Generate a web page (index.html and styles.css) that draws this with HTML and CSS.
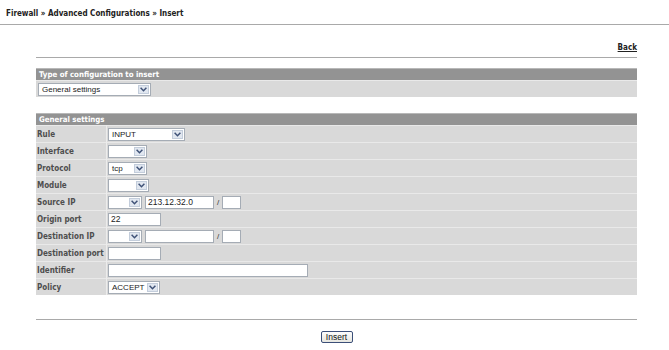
FILE: index.html
```html
<!DOCTYPE html>
<html>
<head>
<meta charset="utf-8">
<link rel="stylesheet" href="styles.css">
</head>
<body>
<h1 class="crumbs">Firewall » Advanced Configurations » Insert</h1>
<div class="page">
  <div class="backrow"><a href="#" class="back">Back</a></div>
  <table class="grid first">
    <tr><th>Type of configuration to insert</th></tr>
    <tr><td class="one"><span class="sel w113"><span class="val">General settings</span><span class="arr"><svg width="7" height="5" viewBox="0 0 7 5"><path d="M0.6 0.8 L3.5 3.7 L6.4 0.8" fill="none" stroke="#3f5277" stroke-width="1.5"/></svg></span></span></td></tr>
  </table>
  <table class="grid second">
    <tr><th colspan="2">General settings</th></tr>
    <tr><td class="lab">Rule</td><td class="ctl"><span class="sel w77"><span class="val">INPUT</span><span class="arr"><svg width="7" height="5" viewBox="0 0 7 5"><path d="M0.6 0.8 L3.5 3.7 L6.4 0.8" fill="none" stroke="#3f5277" stroke-width="1.5"/></svg></span></span></td></tr>
    <tr><td class="lab">Interface</td><td class="ctl"><span class="sel w39"><span class="val"></span><span class="arr"><svg width="7" height="5" viewBox="0 0 7 5"><path d="M0.6 0.8 L3.5 3.7 L6.4 0.8" fill="none" stroke="#3f5277" stroke-width="1.5"/></svg></span></span></td></tr>
    <tr><td class="lab">Protocol</td><td class="ctl"><span class="sel w39"><span class="val">tcp</span><span class="arr"><svg width="7" height="5" viewBox="0 0 7 5"><path d="M0.6 0.8 L3.5 3.7 L6.4 0.8" fill="none" stroke="#3f5277" stroke-width="1.5"/></svg></span></span></td></tr>
    <tr><td class="lab">Module</td><td class="ctl"><span class="sel w41"><span class="val"></span><span class="arr"><svg width="7" height="5" viewBox="0 0 7 5"><path d="M0.6 0.8 L3.5 3.7 L6.4 0.8" fill="none" stroke="#3f5277" stroke-width="1.5"/></svg></span></span></td></tr>
    <tr><td class="lab">Source IP</td><td class="ctl"><span class="sel w34"><span class="val"></span><span class="arr"><svg width="7" height="5" viewBox="0 0 7 5"><path d="M0.6 0.8 L3.5 3.7 L6.4 0.8" fill="none" stroke="#3f5277" stroke-width="1.5"/></svg></span></span><span class="inp w69">213.12.32.0</span><span class="slash">/</span><span class="inp w19"></span></td></tr>
    <tr><td class="lab">Origin port</td><td class="ctl"><span class="inp w53">22</span></td></tr>
    <tr><td class="lab">Destination IP</td><td class="ctl"><span class="sel w34"><span class="val"></span><span class="arr"><svg width="7" height="5" viewBox="0 0 7 5"><path d="M0.6 0.8 L3.5 3.7 L6.4 0.8" fill="none" stroke="#3f5277" stroke-width="1.5"/></svg></span></span><span class="inp w69"></span><span class="slash">/</span><span class="inp w19"></span></td></tr>
    <tr><td class="lab">Destination port</td><td class="ctl"><span class="inp w53"></span></td></tr>
    <tr><td class="lab">Identifier</td><td class="ctl"><span class="inp w200"></span></td></tr>
    <tr><td class="lab">Policy</td><td class="ctl"><span class="sel w52"><span class="val">ACCEPT</span><span class="arr"><svg width="7" height="5" viewBox="0 0 7 5"><path d="M0.6 0.8 L3.5 3.7 L6.4 0.8" fill="none" stroke="#3f5277" stroke-width="1.5"/></svg></span></span></td></tr>
  </table>
  <div class="actions"><button class="btn">Insert</button></div>
</div>
</body>
</html>
```
FILE: styles.css
```css
html, body { margin: 0; padding: 0; background: #fff; }
body { font-family: "DejaVu Sans Condensed", "DejaVu Sans", Verdana, sans-serif; font-size: 8px; color: #333; }
.crumbs {
  margin: 0;
  padding: 9px 6px 5px;
  font-size: 8px;
  line-height: 10px;
  font-weight: bold;
  color: #222;
  border-bottom: 1px solid #a9a9a9;
}
.page { margin: 0 32px 0 36px; }
.backrow {
  text-align: right;
  padding: 17px 0 4px;
  border-bottom: 1px solid #a9a9a9;
  line-height: 11px;
}
.back { font-size: 8px; font-weight: bold; color: #222; text-decoration: underline; }
.grid { width: 100%; border-collapse: collapse; border-spacing: 0; font-size: 8px; line-height: 11px; }
.grid.first { margin-top: 10px; }
.grid.second { margin-top: 16px; }
.grid th {
  background: #939393;
  border-top: 1px solid #b8b8b8;
  color: #fff;
  font-size: 7.8px;
  font-weight: bold;
  text-align: left;
  padding: 0 3px;
  height: 11px;
  line-height: 11px;
}
.grid td {
  background: #d9d9d9;
  border-top: 1px solid #e9e9e9;
  height: 16px;
  padding: 0;
  vertical-align: middle;
}
.grid td.one { padding-left: 2px; }
.grid td.lab {
  width: 69px;
  padding-left: 1px;
  font-size: 8px;
  font-weight: bold;
  color: #4e4e4e;
  border-right: 1px solid #ececec;
  white-space: nowrap;
}
.grid td.ctl { padding-left: 1px; }
.sel, .inp {
  display: inline-block;
  vertical-align: middle;
  box-sizing: border-box;
  height: 13px;
  background: #fff;
  border: 1px solid #a5acb5;
  font-family: "Liberation Sans", Arial, sans-serif;
  font-size: 8.5px;
  line-height: 11px;
  color: #222;
  position: relative;
}
.sel { font-size: 8px; }
.sel .val { padding-left: 3px; }
.sel .arr {
  position: absolute;
  right: 1px;
  top: 1px;
  width: 11px;
  height: 9px;
  box-sizing: border-box;
  border: 1px solid #c3cddb;
  background: #e1e7f0;
  display: flex;
  align-items: center;
  justify-content: center;
}
.inp { padding-left: 2px; }
.w113 { width: 113px; }
.w77 { width: 77px; }
.w39 { width: 39px; }
.w41 { width: 41px; }
.w34 { width: 34px; }
.w52 { width: 52px; }
.w69 { width: 69px; margin-left: 3px; }
.w19 { width: 19px; }
.w53 { width: 53px; }
.w200 { width: 200px; }
.slash { display: inline-block; vertical-align: middle; width: 8px; text-align: center; font-family: "Liberation Sans", Arial, sans-serif; font-size: 8px; color: #333; }
.actions {
  margin-top: 24px;
  border-top: 1px solid #a9a9a9;
  padding-top: 11px;
  text-align: center;
}
.btn {
  font-family: "Liberation Sans", Arial, sans-serif;
  font-size: 8.5px;
  height: 12px;
  width: 32px;
  padding: 0;
  line-height: 10px;
  color: #111;
  background: linear-gradient(#fdfdfd, #e6e6e0);
  border: 1px solid #3c4f78;
  border-radius: 2px;
}
```
